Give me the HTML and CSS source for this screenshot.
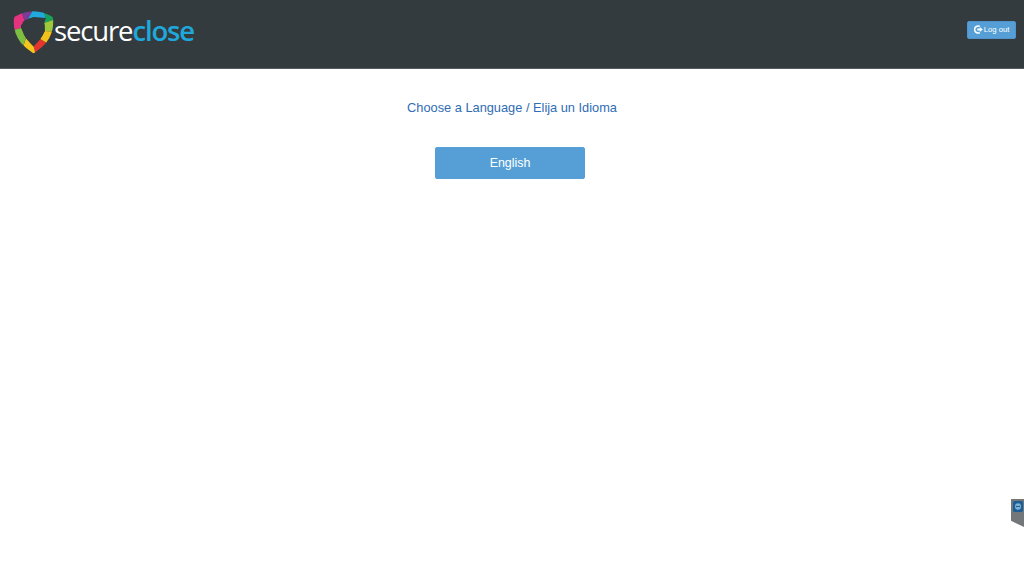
FILE: index.html
```
<!DOCTYPE html>
<html lang="en">
<head>
<meta charset="utf-8">
<title>SecureClose</title>
<link rel="stylesheet" href="styles.css">
</head>
<body>
<header class="topbar">
  <a class="brand" href="#">
    <svg class="shield" viewBox="13 11 41 43" width="41" height="43" aria-hidden="true">
      <defs>
        <clipPath id="shield-outer">
          <path d="M14 18.5 Q14 17 15.5 16.3 Q24 11.5 33.5 11.3 Q43 11.5 51.5 16.3 Q53 17 53 18.5 Q54.5 32 46 43 Q40.5 49 34.5 52.8 Q33.5 53.5 32.5 52.8 Q26.5 49 21 43 Q12.5 32 14 18.5Z"/>
        </clipPath>
      </defs>
      <g clip-path="url(#shield-outer)">
        <polygon points="10,10 21,10 25,22 21,25 21,28 10,31" fill="#e6337f"/>
        <polygon points="21,10 33,10 28,19 25,22" fill="#7b3b96"/>
        <polygon points="33,10 43,10 46,18 33.5,17 28,19" fill="#1fa9dc"/>
        <polygon points="43,10 56,10 56,19 44,23 46,18" fill="#17a25a"/>
        <polygon points="56,19 56,32 45,31 44,23" fill="#9fc93c"/>
        <polygon points="56,32 50,45 40,39 45,31" fill="#f2c21b"/>
        <polygon points="50,45 36,56 33.5,46 40,39" fill="#e5352f"/>
        <polygon points="36,56 20,56 26,38 33.5,46" fill="#f4c51c"/>
        <polygon points="10,31 21,28 26,38 20,56 10,50" fill="#7dbe43"/>
      </g>
      <path d="M33.5 17.8 Q27.5 18.3 22.8 22 Q20.5 31 26.5 38.8 Q30 43.2 33.5 46.5 Q37 43.2 40.5 38.8 Q46.5 31 44.2 22 Q39.5 18.3 33.5 17.8Z" fill="#343b3e"/>
    </svg>
    <span class="wordmark">secure<b>close</b></span>
  </a>
  <button class="logout" type="button">
    <svg class="logout-icon" viewBox="0 0 10 10" width="9" height="9" aria-hidden="true">
      <path d="M6.5 1.6A3.9 3.9 0 1 0 6.5 8.4" fill="none" stroke="#fff" stroke-width="1.7"/>
      <path d="M3.6 4H6.4V2.2L9.8 5L6.4 7.8V6H3.6Z" fill="#fff"/>
    </svg>
    Log out
  </button>
</header>
<main class="content">
  <p class="prompt">Choose a Language / Elija un Idioma</p>
  <button class="language" type="button">English</button>
</main>
<aside class="remote-tab" aria-label="Remote support">
  <svg viewBox="0 0 10 10" width="10" height="11" preserveAspectRatio="none" aria-hidden="true">
    <rect width="10" height="10" rx="1.5" fill="#1b5f96"/>
    <circle cx="5" cy="5" r="3" fill="#7fb2d3"/>
    <path d="M2.6 5L3.9 4V4.6H6.1V4L7.4 5L6.1 6V5.4H3.9V6Z" fill="#1b5f96"/>
  </svg>
</aside>
</body>
</html>
```
FILE: styles.css
```
* { box-sizing: border-box; }
html, body { margin: 0; height: 100%; }
body {
  background: #fff;
  font-family: "Liberation Sans", Arial, sans-serif;
  color: #2f6db5;
  overflow: hidden;
  position: relative;
}
.topbar {
  height: 69px;
  background: #343b3e;
  border-bottom: 1px solid #555c5f;
  display: flex;
  align-items: center;
  justify-content: space-between;
  padding: 0 8px 0 13px;
}
.brand {
  display: flex;
  align-items: center;
  text-decoration: none;
}
.shield { display: block; margin-bottom: 3px; }
.wordmark {
  font-family: "Open Sans", sans-serif;
  font-size: 27.5px;
  line-height: 40px;
  letter-spacing: -1.15px;
  color: #fff;
  font-weight: 400;
  margin-bottom: 6px;
}
.wordmark b { color: #1fa8dc; font-weight: 600; }
.logout {
  width: 49px;
  height: 18px;
  padding: 0;
  border: 1px solid #4f94cd;
  border-radius: 2px;
  background: #559fd6;
  color: #fff;
  font: 7.7px "Liberation Sans", Arial, sans-serif;
  display: flex;
  align-items: center;
  justify-content: center;
  gap: 1px;
  margin-bottom: 9px;
}
.logout-icon { display: block; }
.content {
  display: flex;
  flex-direction: column;
  align-items: center;
  padding-top: 30px;
}
.prompt {
  margin: 0 0 30px;
  font-size: 12.8px;
  line-height: 18px;
}
.language {
  width: 150px;
  height: 32px;
  padding: 0;
  margin-right: 4px;
  border: 1px solid #559fd6;
  border-radius: 2px;
  background: #559fd6;
  color: #fff;
  font: 12.4px "Liberation Sans", Arial, sans-serif;
}
.remote-tab {
  position: absolute;
  right: 0;
  top: 499px;
  width: 13px;
  height: 28px;
  background: #74777a;
  clip-path: polygon(0 0, 100% 0, 100% 100%, 0 78%);
  padding: 2px 0 0 2px;
}
.remote-tab svg { display: block; }
```
